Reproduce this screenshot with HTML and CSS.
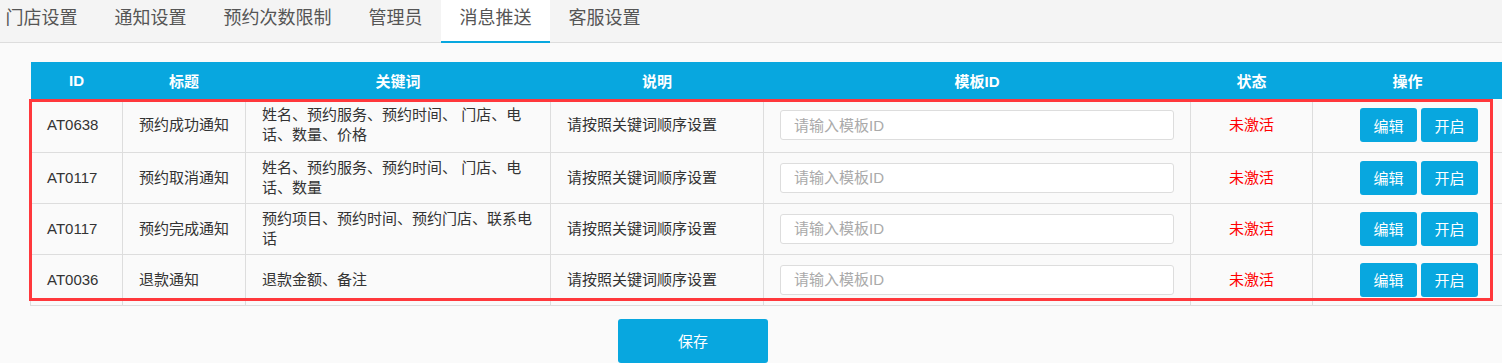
FILE: index.html
```html
<!DOCTYPE html>
<html lang="zh-CN">
<head>
  <meta charset="UTF-8" />
  <title>消息推送</title>
  <link rel="stylesheet" href="styles.css">
</head>
<body>

  <!-- TABS -->
  <div class="tabs">
    <div class="tab">门店设置</div>
    <div class="tab">通知设置</div>
    <div class="tab">预约次数限制</div>
    <div class="tab">管理员</div>
    <div class="tab active">消息推送</div>
    <div class="tab">客服设置</div>
  </div>

  <!-- MESSAGE TABLE -->
  <div class="table-wrap">
    <table class="msg-table">
      <colgroup>
        <col style="width:92px">
        <col style="width:123px">
        <col style="width:305px">
        <col style="width:213px">
        <col style="width:427px">
        <col style="width:122px">
        <col style="width:190px">
      </colgroup>
      <thead>
        <tr>
          <th>ID</th>
          <th>标题</th>
          <th>关键词</th>
          <th>说明</th>
          <th>模板ID</th>
          <th>状态</th>
          <th>操作</th>
        </tr>
      </thead>
      <tbody>
        <tr>
          <td>AT0638</td>
          <td>预约成功通知</td>
          <td class="kw">姓名、预约服务、预约时间、 门店、电话、数量、价格</td>
          <td>请按照关键词顺序设置</td>
          <td><input type="text" class="tpl-input" placeholder="请输入模板ID"></td>
          <td class="status">未激活</td>
          <td class="ops"><button class="btn">编辑</button><button class="btn">开启</button></td>
        </tr>
        <tr>
          <td>AT0117</td>
          <td>预约取消通知</td>
          <td class="kw">姓名、预约服务、预约时间、 门店、电话、数量</td>
          <td>请按照关键词顺序设置</td>
          <td><input type="text" class="tpl-input" placeholder="请输入模板ID"></td>
          <td class="status">未激活</td>
          <td class="ops"><button class="btn">编辑</button><button class="btn">开启</button></td>
        </tr>
        <tr>
          <td>AT0117</td>
          <td>预约完成通知</td>
          <td class="kw">预约项目、预约时间、预约门店、联系电话</td>
          <td>请按照关键词顺序设置</td>
          <td><input type="text" class="tpl-input" placeholder="请输入模板ID"></td>
          <td class="status">未激活</td>
          <td class="ops"><button class="btn">编辑</button><button class="btn">开启</button></td>
        </tr>
        <tr>
          <td>AT0036</td>
          <td>退款通知</td>
          <td class="kw">退款金额、备注</td>
          <td>请按照关键词顺序设置</td>
          <td><input type="text" class="tpl-input" placeholder="请输入模板ID"></td>
          <td class="status">未激活</td>
          <td class="ops"><button class="btn">编辑</button><button class="btn">开启</button></td>
        </tr>
      </tbody>
    </table>
    <!-- highlight box over the rows -->
    <div class="mark"></div>
  </div>

  <div class="footer">
    <button class="btn-save">保存</button>
  </div>

</body>
</html>
```

FILE: styles.css
```css
* {
  box-sizing: border-box;
}
body {
  font-family: "Liberation Sans", "Noto Sans CJK SC", sans-serif;
  font-size: 15px;
  margin: 0;
  padding: 0;
  background: #fafafa;
  color: #333;
  overflow: hidden;
}

/* Tabs */
.tabs {
  display: flex;
  background: #f4f4f4;
  border-bottom: 1px solid #ddd;
  padding-left: 0;
  margin-left: -13px;
}

.tab {
  font-size: 18px;
  line-height: 36px;
  padding: 0 18.5px 5px;
  margin-bottom: -1px;
  border-bottom: 2px solid transparent;
  color: #555;
  cursor: pointer;
}

.tab.active {
  background: #fff;
  border-bottom-color: #08a7df;
}

/* Table */
.table-wrap {
  position: relative;
  margin: 19px 0 0 30px;
}

.msg-table {
  table-layout: fixed;
  width: 1472px;
  border-collapse: collapse;
}

.msg-table th {
  height: 37px;
  padding: 0;
  background: #08a7df;
  color: #fff;
  font-weight: bold;
  text-align: center;
}

.msg-table td {
  height: 51px;
  padding: 0 16px;
  line-height: 20px;
  border: 1px solid #ddd;
  border-top: none;
  vertical-align: middle;
}

.msg-table tbody tr:first-child td {
  height: 53px;
}

.msg-table td.kw {
  padding-right: 17px;
}

.msg-table td.status {
  text-align: center;
  color: #f00;
}

.msg-table td.ops {
  text-align: right;
  padding-right: 24px;
  font-size: 0;
}

.tpl-input {
  display: block;
  width: 100%;
  height: 30px;
  padding: 0 13px;
  border: 1px solid #ddd;
  border-radius: 3px;
  background: #fff;
  font-family: inherit;
  font-size: 15px;
  color: #333;
}

.tpl-input::placeholder {
  color: #aaa;
}

.btn {
  width: 57px;
  height: 34px;
  margin-left: 4px;
  border: none;
  border-radius: 3px;
  background: #08a7df;
  color: #fff;
  font-family: inherit;
  font-size: 15px;
  cursor: pointer;
  vertical-align: middle;
}

.mark {
  position: absolute;
  left: -1px;
  top: 37px;
  width: 1464px;
  height: 202px;
  border: 3px solid #ff383c;
  pointer-events: none;
}

/* Save */
.footer {
  padding: 13px 0 0 618px;
}

.btn-save {
  display: block;
  width: 150px;
  height: 44px;
  border: none;
  border-radius: 3px;
  background: #08a7df;
  color: #fff;
  font-family: inherit;
  font-size: 15px;
  cursor: pointer;
}
```
